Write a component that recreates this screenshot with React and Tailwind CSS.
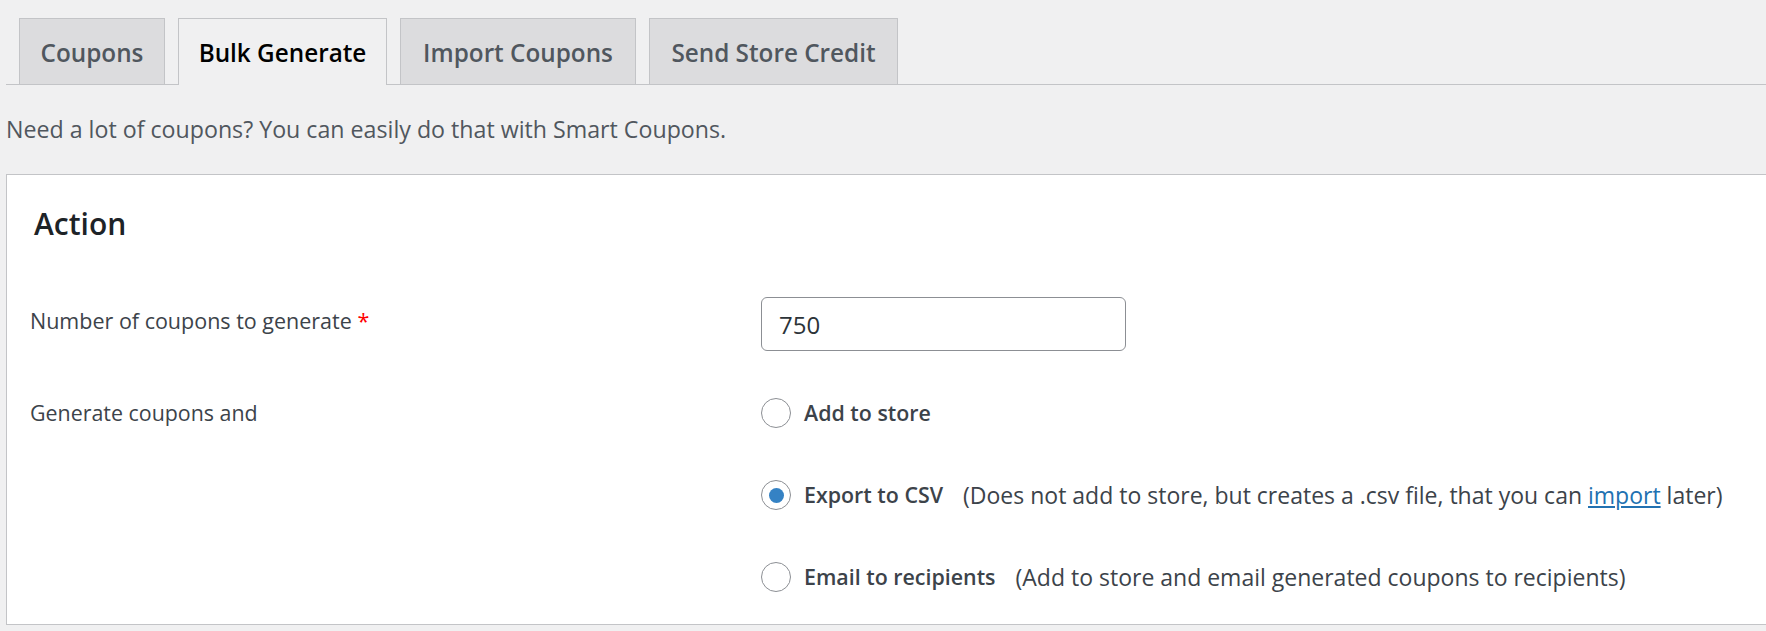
import React, { useState } from "react";

const tabs = [
  { label: "Coupons", w: "w-[146px]" },
  { label: "Bulk Generate", w: "w-[209px]" },
  { label: "Import Coupons", w: "w-[236px]" },
  { label: "Send Store Credit", w: "w-[249px]" },
];

function Radio({ checked, onClick }) {
  return (
    <button
      type="button"
      onClick={onClick}
      className="w-[30px] h-[30px] shrink-0 rounded-full border border-[#8c8f94] bg-white flex items-center justify-center"
    >
      {checked && <span className="w-[15px] h-[15px] rounded-full bg-[#3582c4]" />}
    </button>
  );
}

export default function App() {
  const [active, setActive] = useState(1);
  const [count, setCount] = useState("750");
  const [action, setAction] = useState("csv");

  const options = [
    { id: "store", label: "Add to store" },
    {
      id: "csv",
      label: "Export to CSV",
      note: (
        <>
          (Does not add to store, but creates a .csv file, that you can{" "}
          <a href="#" className="text-[#2271b1] underline">import</a> later)
        </>
      ),
    },
    { id: "email", label: "Email to recipients", note: "(Add to store and email generated coupons to recipients)" },
  ];

  return (
    <div className="min-h-screen bg-[#f0f0f1] text-[#3c434a] font-['Open_Sans',sans-serif] pt-[18px] pl-[6px] overflow-hidden">
      <nav className="flex items-end border-b border-[#c3c4c7]">
        {tabs.map((t, i) => (
          <button
            key={t.label}
            onClick={() => setActive(i)}
            className={`ml-[13px] ${t.w} h-[66px] pt-[3px] border border-b-0 border-[#c3c4c7] text-[24.3px] font-semibold leading-none ${
              i === active ? "bg-[#f0f0f1] text-black -mb-px h-[67px] border-b border-b-[#f0f0f1]" : "bg-[#dcdcde] text-[#50575e]"
            }`}
          >
            {t.label}
          </button>
        ))}
      </nav>

      <p className="mt-[29px] text-[23.2px] leading-[30px] text-[#50575e]">Need a lot of coupons? You can easily do that with Smart Coupons.</p>

      <section className="mt-[30px] bg-white border border-r-0 border-[#c3c4c7] pt-[29px] pb-[32px] pl-[23px]">
        <h2 className="pl-[4px] text-[30px] font-semibold leading-[40px] text-[#1d2327]">Action</h2>

        <div className="mt-[53px] grid grid-cols-[731px_1fr]">
          <div className="pt-[9px] text-[21.5px] leading-[30px]">
            Number of coupons to generate <span className="text-[#ff0000] font-normal">*</span>
          </div>
          <input
            value={count}
            onChange={(e) => setCount(e.target.value)}
            className="w-[365px] h-[54px] rounded-[6px] border border-[#8c8f94] pl-[17px] text-[24px] text-[#2c3338] outline-none"
          />
        </div>

        <div className="mt-[47px] grid grid-cols-[731px_1fr]">
          <div className="text-[21.4px] leading-[30px]">Generate coupons and</div>
          <div className="flex flex-col gap-[52px]">
            {options.map((o) => (
              <label key={o.id} className="flex items-center h-[30px] cursor-pointer" onClick={() => setAction(o.id)}>
                <Radio checked={action === o.id} />
                <span className="ml-[13px] font-semibold text-[21.4px]">{o.label}</span>
                {o.note && <span className="ml-[20px] text-[23px]">{o.note}</span>}
              </label>
            ))}
          </div>
        </div>
      </section>
    </div>
  );
}
